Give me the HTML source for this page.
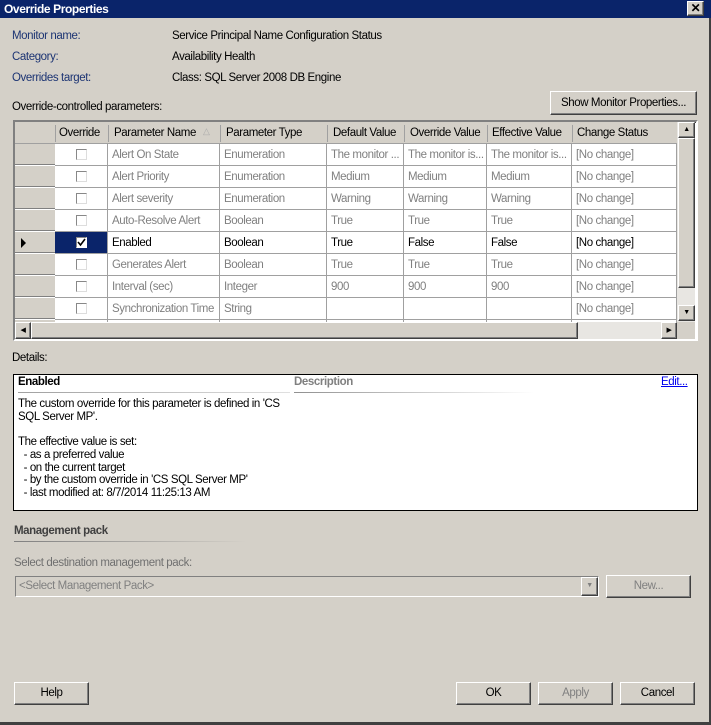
<!DOCTYPE html>
<html><head><meta charset="utf-8"><style>
*{margin:0;padding:0;box-sizing:border-box}
body{width:711px;height:725px;background:#d4d0c8;font-family:"Liberation Sans",sans-serif;font-size:11.5px;color:#000;position:relative;overflow:hidden;letter-spacing:-0.4px}
.a{position:absolute;white-space:nowrap}
.btn{position:absolute;background:#d4d0c8;border:1px solid;border-color:#fff #404040 #404040 #fff;box-shadow:inset -1px -1px 0 #808080;text-align:center}
.lbl{color:#1c3473}
.g{color:#808080}
.cell{position:absolute;height:22px;line-height:23px;padding-left:4px;border-right:1px solid #a0a0a0;border-bottom:1px solid #a0a0a0;overflow:hidden;white-space:nowrap}
.cb{position:absolute;width:11px;height:11px;border:1px solid #888;background:#fff;border-right-color:#ddd;border-bottom-color:#ddd}
</style></head><body>
<div class="a" style="left:0;top:0;width:711px;height:18px;background:#0a246a"></div>
<div class="a" style="left:4px;top:2px;color:#fff;font-weight:bold;font-size:12px">Override Properties</div>
<div class="btn" style="left:687px;top:1px;width:17px;height:15px;line-height:12px;font-weight:bold;font-size:12px">✕</div>
<div class="a" style="left:709px;top:18px;width:2px;height:707px;background:#404040"></div>
<div class="a" style="left:0;top:722px;width:711px;height:3px;background:#404040"></div>

<div class="a lbl" style="left:12px;top:30px">Monitor name:</div>
<div class="a" style="left:172px;top:30px">Service Principal Name Configuration Status</div>
<div class="a lbl" style="left:12px;top:51px">Category:</div>
<div class="a" style="left:172px;top:51px">Availability Health</div>
<div class="a lbl" style="left:12px;top:72px">Overrides target:</div>
<div class="a" style="left:172px;top:72px">Class: SQL Server 2008 DB Engine</div>
<div class="a" style="left:12px;top:101px">Override-controlled parameters:</div>
<div class="btn" style="left:550px;top:91px;width:147px;height:24px;line-height:22px">Show Monitor Properties...</div>

<div class="a" style="left:13px;top:120px;width:685px;height:221px;border:2px solid;border-color:#808080 #fff #fff #808080;background:#fff;box-shadow:inset 1px 1px 0 #404040"></div>
<div class="a" style="left:15px;top:122px;width:662px;height:200px;background:#fff;overflow:hidden" id="grid">
<div class="a" style="left:0;top:0;width:40px;height:200px;background:#d4d0c8"></div>
<div class="a" style="left:0;top:0;width:662px;height:22px;background:#d4d0c8;border-bottom:1px solid #a0a0a0"></div>
<div class="a" style="left:44px;top:5px">Override</div>
<div class="a" style="left:99px;top:5px">Parameter Name</div>
<div class="a" style="left:188px;top:4px;color:#aaa;font-size:9px">△</div>
<div class="a" style="left:211px;top:5px">Parameter Type</div>
<div class="a" style="left:318px;top:5px">Default Value</div>
<div class="a" style="left:395px;top:5px">Override Value</div>
<div class="a" style="left:477px;top:5px">Effective Value</div>
<div class="a" style="left:562px;top:5px">Change Status</div>
<div class="a" style="left:40px;top:3px;width:1px;height:17px;background:#a0a0a0"></div>
<div class="a" style="left:93px;top:3px;width:1px;height:17px;background:#a0a0a0"></div>
<div class="a" style="left:205px;top:3px;width:1px;height:17px;background:#a0a0a0"></div>
<div class="a" style="left:312px;top:3px;width:1px;height:17px;background:#a0a0a0"></div>
<div class="a" style="left:389px;top:3px;width:1px;height:17px;background:#a0a0a0"></div>
<div class="a" style="left:472px;top:3px;width:1px;height:17px;background:#a0a0a0"></div>
<div class="a" style="left:557px;top:3px;width:1px;height:17px;background:#a0a0a0"></div>
</div>
<div class="a" id="rows" style="left:15px;top:144px;width:662px;height:178px;overflow:hidden"></div>
<script>
var rows=[["Alert On State","Enumeration","The monitor ...","The monitor is...","The monitor is..."],
["Alert Priority","Enumeration","Medium","Medium","Medium"],
["Alert severity","Enumeration","Warning","Warning","Warning"],
["Auto-Resolve Alert","Boolean","True","True","True"],
["Enabled","Boolean","True","False","False"],
["Generates Alert","Boolean","True","True","True"],
["Interval (sec)","Integer","900","900","900"],
["Synchronization Time","String","","",""],["","","","",""]];
var xs=[40,93,205,312,389,472,557,662],h="";
rows.forEach(function(r,i){var y=i*22,sel=i==4,cls=sel?"":" g";
h+='<div class="a" style="left:0;top:'+(y+20)+'px;width:40px;height:1px;background:#808080"></div><div class="a" style="left:0;top:'+(y+21)+'px;width:40px;height:1px;background:#fff"></div>';
if(sel)h+='<div class="a" style="left:6px;top:'+(y+6)+'px;width:0;height:0;border-left:5px solid #000;border-top:5px solid transparent;border-bottom:5px solid transparent"></div>';
h+='<div class="cell" style="left:40px;top:'+y+'px;width:53px;'+(sel?'background:#0a246a':'')+'"></div>';
h+='<div class="cb" style="left:61px;top:'+(y+5)+'px;'+(sel?'border-color:#888 #fff #fff #888':'')+'">'+(sel?'<svg width="9" height="9" style="position:absolute;left:0;top:0"><path d="M1 4 L3.5 7 L8 1" stroke="#000" stroke-width="1.6" fill="none"/></svg>':'')+'</div>';
var vals=[r[0],r[1],r[2],r[3],r[4],i<8?"[No change]":""];
for(var k=0;k<6;k++){h+='<div class="cell'+cls+'" style="left:'+xs[k+1]+'px;top:'+y+'px;width:'+(xs[k+2]-xs[k+1])+'px">'+vals[k]+'</div>';}
});
document.getElementById("rows").innerHTML=h;
</script>
<div class="a" style="left:677px;top:122px;width:18px;height:200px;background:#e8e6e2"></div>
<div class="btn" style="left:678px;top:122px;width:17px;height:16px;font-size:7px;line-height:14px">▲</div>
<div class="btn" style="left:678px;top:138px;width:17px;height:150px"></div>
<div class="btn" style="left:678px;top:305px;width:17px;height:16px;font-size:7px;line-height:14px">▼</div>
<div class="a" style="left:15px;top:322px;width:662px;height:17px;background:#e8e6e2"></div>
<div class="btn" style="left:15px;top:322px;width:16px;height:17px;font-size:7px;line-height:15px">◀</div>
<div class="btn" style="left:31px;top:322px;width:547px;height:17px"></div>
<div class="btn" style="left:661px;top:322px;width:16px;height:17px;font-size:7px;line-height:15px">▶</div>
<div class="a" style="left:677px;top:322px;width:18px;height:17px;background:#d4d0c8"></div>

<div class="a" style="left:12px;top:352px">Details:</div>
<div class="a" style="left:13px;top:374px;width:685px;height:137px;background:#fff;border:1px solid #000"></div>
<div class="a" style="left:18px;top:376px;font-weight:bold">Enabled</div>
<div class="a" style="left:18px;top:392px;width:272px;height:1px;background:linear-gradient(90deg,#a0a0a0,#e0e0e0)"></div>
<div class="a" style="left:294px;top:376px;font-weight:bold;color:#808080">Description</div>
<div class="a" style="left:294px;top:392px;width:240px;height:1px;background:linear-gradient(90deg,#909090,#fff)"></div>
<div class="a" style="left:661px;top:376px;color:#0000ee;text-decoration:underline">Edit...</div>
<div class="a" style="left:18px;top:398px;line-height:12.7px">The custom override for this parameter is defined in 'CS<br>SQL Server MP'.<br><br>The effective value is set:<br>&nbsp; - as a preferred value<br>&nbsp; - on the current target<br>&nbsp; - by the custom override in 'CS SQL Server MP'<br>&nbsp; - last modified at: 8/7/2014 11:25:13 AM</div>

<div class="a" style="left:14px;top:525px;font-weight:bold;color:#404040">Management pack</div>
<div class="a" style="left:14px;top:541px;width:232px;height:1px;background:linear-gradient(90deg,#808080,#d4d0c8)"></div>
<div class="a" style="left:14px;top:557px;color:#707070">Select destination management pack:</div>
<div class="a" style="left:15px;top:576px;width:584px;height:21px;border:1px solid;border-color:#808080 #fff #fff #808080;background:#d4d0c8"></div>
<div class="a" style="left:19px;top:580px;color:#808080">&lt;Select Management Pack&gt;</div>
<div class="btn" style="left:581px;top:577px;width:17px;height:19px;font-size:7px;line-height:16px;color:#808080">▼</div>
<div class="btn" style="left:606px;top:575px;width:85px;height:23px;line-height:21px;color:#808080">New...</div>

<div class="btn" style="left:14px;top:682px;width:75px;height:23px;line-height:21px">Help</div>
<div class="btn" style="left:456px;top:682px;width:75px;height:23px;line-height:21px">OK</div>
<div class="btn" style="left:538px;top:682px;width:75px;height:23px;line-height:21px;color:#808080">Apply</div>
<div class="btn" style="left:620px;top:682px;width:75px;height:23px;line-height:21px">Cancel</div>
</body></html>
